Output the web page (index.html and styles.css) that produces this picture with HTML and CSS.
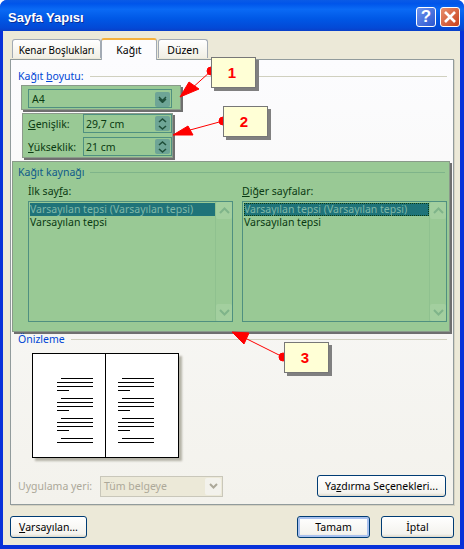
FILE: index.html
```html
<!DOCTYPE html>
<html lang="tr">
<head>
    <meta charset="UTF-8">
    <meta name="viewport" content="width=device-width, initial-scale=1.0">
    <title>Sayfa Yapısı</title>
    <link rel="stylesheet" href="styles.css">
</head>
<body>
    <div class="window">
        <header class="titlebar">
            <span class="title">Sayfa Yapısı</span>
            <span class="cap-btn help">?</span>
            <span class="cap-btn close">
                <svg width="14" height="14" viewBox="0 0 14 14"><path d="M2 2 L12 12 M12 2 L2 12" stroke="#fff" stroke-width="2.6" fill="none"/></svg>
            </span>
        </header>

        <div class="body">
            <div class="tabs">
                <div class="tab tab-first">Kenar Boşlukları</div>
                <div class="tab tab-active">Kağıt</div>
                <div class="tab tab-last">Düzen</div>
            </div>

            <div class="panel">
                <div class="legend legend-paper"><span>Kağıt <u>b</u>oyutu:</span><i></i></div>

                <div class="hl hl-size">
                    <div class="combo">
                        <span>A4</span>
                        <span class="spin-btn combo-btn"><svg width="9" height="7" viewBox="0 0 9 7"><path d="M1 1 L4.5 4.5 L8 1 M1 3 L4.5 6.5 L8 3" stroke="#1f4f3a" stroke-width="1.4" fill="none"/></svg></span>
                    </div>
                </div>

                <div class="hl hl-dims">
                    <div class="dim-row">
                        <label><u>G</u>enişlik:</label>
                        <div class="spin">
                            <span>29,7 cm</span>
                            <span class="spin-btn"><svg width="9" height="14" viewBox="0 0 9 14"><path d="M1 5 L4.5 2 L8 5 M1 9 L4.5 12 L8 9" stroke="#1f4f3a" stroke-width="1.6" fill="none"/></svg></span>
                        </div>
                    </div>
                    <div class="dim-row">
                        <label><u>Y</u>ükseklik:</label>
                        <div class="spin">
                            <span>21 cm</span>
                            <span class="spin-btn"><svg width="9" height="14" viewBox="0 0 9 14"><path d="M1 5 L4.5 2 L8 5 M1 9 L4.5 12 L8 9" stroke="#1f4f3a" stroke-width="1.6" fill="none"/></svg></span>
                        </div>
                    </div>
                </div>

                <div class="hl hl-source">
                    <div class="legend legend-source"><span>Kağıt kaynağı</span><i></i></div>
                    <div class="lists">
                        <div class="list-col">
                            <label>İlk say<u>f</u>a:</label>
                            <div class="listbox">
                                <div class="list-items">
                                    <div class="item selected">Varsayılan tepsi (Varsayılan tepsi)</div>
                                    <div class="item">Varsayılan tepsi</div>
                                </div>
                                <div class="scroll">
                                    <span class="scroll-btn"><svg width="11" height="7" viewBox="0 0 11 7"><path d="M1 6 L5.5 1.5 L10 6" stroke="#7fb48a" stroke-width="2" fill="none"/></svg></span>
                                    <span class="scroll-btn"><svg width="11" height="7" viewBox="0 0 11 7"><path d="M1 1 L5.5 5.5 L10 1" stroke="#7fb48a" stroke-width="2" fill="none"/></svg></span>
                                </div>
                            </div>
                        </div>
                        <div class="list-col">
                            <label><u>D</u>iğer sayfalar:</label>
                            <div class="listbox">
                                <div class="list-items">
                                    <div class="item selected focused">Varsayılan tepsi (Varsayılan tepsi)</div>
                                    <div class="item">Varsayılan tepsi</div>
                                </div>
                                <div class="scroll">
                                    <span class="scroll-btn"><svg width="11" height="7" viewBox="0 0 11 7"><path d="M1 6 L5.5 1.5 L10 6" stroke="#7fb48a" stroke-width="2" fill="none"/></svg></span>
                                    <span class="scroll-btn"><svg width="11" height="7" viewBox="0 0 11 7"><path d="M1 1 L5.5 5.5 L10 1" stroke="#7fb48a" stroke-width="2" fill="none"/></svg></span>
                                </div>
                            </div>
                        </div>
                    </div>
                </div>

                <div class="legend legend-preview"><span>Önizleme</span><i></i></div>

                <div class="preview">
                    <svg class="preview-lines" width="145" height="103" viewBox="0 0 145 103">
                        <path d="M28 24.5h32 M24 28.5h36 M24 32.5h36 M24 36.5h12 M28 44.5h32 M24 48.5h36 M24 52.5h36 M24 56.5h12 M28 64.5h32 M24 68.5h36 M24 72.5h36 M24 76.5h12 M28 84.5h32 M24 88.5h36" stroke="#000" fill="none"/>
                        <path d="M89 24.5h32 M85 28.5h36 M85 32.5h36 M85 36.5h12 M89 44.5h32 M85 48.5h36 M85 52.5h36 M85 56.5h12 M89 64.5h32 M85 68.5h36 M85 72.5h36 M85 76.5h12 M89 84.5h32 M85 88.5h36" stroke="#000" fill="none"/>
                        <path d="M72.5 0v103" stroke="#000" fill="none"/>
                    </svg>
                </div>

                <div class="apply-row">
                    <label>Uygulama yeri:</label>
                    <div class="combo-off">
                        <span>Tüm belgeye</span>
                        <span class="off-btn"><svg width="9" height="6" viewBox="0 0 9 6"><path d="M1 1 L4.5 4.5 L8 1" stroke="#aca899" stroke-width="2" fill="none"/></svg></span>
                    </div>
                    <button class="btn btn-print">Ya<u>z</u>dırma Seçenekleri...</button>
                </div>
            </div>

            <div class="footer">
                <button class="btn btn-default"><u>V</u>arsayılan...</button>
                <button class="btn btn-ok">Tamam</button>
                <button class="btn btn-cancel">İptal</button>
            </div>
        </div>

        <!-- numarali oklar -->
        <svg class="arrows" width="464" height="549" viewBox="0 0 464 549">
            <g stroke="#f00" fill="#f00">
                <path d="M211 71 L190 90" fill="none"/>
                <path d="M180 97 L189 82 L199 89 Z"/>
                <circle cx="211" cy="71" r="4"/>
                <path d="M223 121 L190 130" fill="none"/>
                <path d="M173 135 L188 126 L193 135 Z"/>
                <circle cx="223" cy="121" r="4"/>
                <path d="M283 357 L245 338" fill="none"/>
                <path d="M232 332 L249 333 L244 344 Z"/>
                <circle cx="283" cy="357" r="4"/>
            </g>
        </svg>
        <div class="callout callout-1">1</div>
        <div class="callout callout-2">2</div>
        <div class="callout callout-3">3</div>
    </div>
</body>
</html>
```

FILE: styles.css
```css
* {
    box-sizing: border-box;
}
body {
    margin: 0;
    background: #fff;
    font-family: "Noto Sans", "Liberation Sans", sans-serif;
    font-size: 10.5px;
    color: #000;
}
.window {
    position: relative;
    width: 464px;
    height: 549px;
    display: flex;
    flex-direction: column;
    background: #0831d9;
    border-radius: 7px 7px 0 0;
    overflow: hidden;
}
.titlebar {
    height: 31px;
    flex: none;
    display: flex;
    align-items: center;
    padding: 2px 4px 0 8px;
    background: linear-gradient(#0a5ae6 0, #0055ea 12%, #0a6af5 30%, #0058e6 60%, #0349d6 90%, #0a3fc8 100%);
}
.title {
    flex: 1;
    color: #fff;
    font-family: "Liberation Sans", sans-serif;
    font-weight: bold;
    font-size: 13px;
    padding-top: 1px;
    text-shadow: 1px 1px 0 #0a2f9a;
}
.cap-btn {
    width: 20px;
    height: 20px;
    margin-left: 4px;
    border: 1px solid #fff;
    border-radius: 3px;
    display: flex;
    align-items: center;
    justify-content: center;
    color: #fff;
    font-family: "Liberation Sans", sans-serif;
    font-weight: bold;
    font-size: 17px;
}
.help {
    background: linear-gradient(135deg, #6f95ee, #2a55d0);
}
.close {
    background: linear-gradient(135deg, #e8906e, #c8401c);
}
.body {
    flex: 1;
    margin: 0 4px 4px 3px;
    background: #ece9d8;
    padding: 7px 6px 0 7px;
    display: flex;
    flex-direction: column;
}
.tabs {
    display: flex;
    height: 21px;
    padding-left: 2px;
    align-items: flex-end;
    position: relative;
    z-index: 1;
}
.tab {
    height: 19px;
    margin-bottom: 1px;
    padding-top: 3px;
    text-align: center;
    font-size: 9.9px;
    background: linear-gradient(#fff, #f1efe4);
    border: 1px solid #a2aab4;
    border-bottom: none;
    border-radius: 3px 3px 0 0;
}
.tab-first {
    width: 89px;
}
.tab-active {
    width: 56px;
    height: 22px;
    margin-bottom: -1px;
    padding-top: 3px;
    font-size: 10.5px;
    background: #fcfcfe;
    border-top: 2px solid #f5b13d;
    border-color: #f5b13d #a2aab4 #fcfcfe;
}
.tab-last {
    width: 50px;
    margin-left: 1px;
    font-size: 10.5px;
}
.panel {
    height: 446px;
    width: 444px;
    flex: none;
    border: 1px solid #919b9c;
    background: linear-gradient(#fcfcfe, #f3f2ec);
    box-shadow: 1px 1px 0 #d5d2c2;
    display: flex;
    flex-direction: column;
}
.legend {
    display: flex;
    align-items: center;
    height: 14px;
    color: #0046d5;
}
.legend i {
    flex: 1;
    height: 1px;
    margin-left: 6px;
    background: #d0d0bf;
}
.legend-paper {
    margin: 9px 6px 0 7px;
}
.legend-source {
    margin: 0 4px 0 5px;
    color: #0f5a8a;
}
.legend-source i {
    background: #7fb48a;
}
.legend-preview {
    margin: 0 6px 0 7px;
}
.hl {
    background: #99c995;
    border: 1px solid #8a9a8a;
    box-shadow: 2px 2px 0 #6f6f6f;
    color: #0a3a12;
}
.hl-size {
    width: 160px;
    height: 25px;
    margin: 2px 0 0 10px;
    padding: 3px 0 0 6px;
}
.combo {
    width: 144px;
    height: 19px;
    border: 1px solid #4f9080;
    display: flex;
    align-items: center;
    justify-content: space-between;
    padding: 1px 1px 0 3px;
}
.spin-btn {
    width: 15px;
    height: 15px;
    background: #6ea596;
    border-radius: 2px;
    display: flex;
    align-items: center;
    justify-content: center;
}
.hl-dims {
    width: 151px;
    height: 45px;
    margin: 3px 0 0 11px;
    padding: 0 0 0 5px;
}
.dim-row {
    display: flex;
    align-items: center;
    height: 19px;
    margin-bottom: 4px;
}
.dim-row label {
    width: 55px;
}
.spin {
    width: 89px;
    height: 19px;
    border: 1px solid #4f9080;
    display: flex;
    align-items: center;
    justify-content: space-between;
    padding: 0 1px 0 2px;
}
.hl-source {
    width: 438px;
    height: 171px;
    margin: 3px 0 0 1px;
    padding-top: 3px;
    color: #0a3a12;
}
.lists {
    display: flex;
    gap: 9px;
    margin: 5px 0 0 15px;
}
.list-col {
    width: 205px;
}
.list-col label {
    display: block;
    height: 17px;
}
.listbox {
    height: 121px;
    border: 1px solid #4f9080;
    display: flex;
}
.list-items {
    flex: 1;
    padding: 1px 0 0 1px;
}
.item {
    height: 13px;
    line-height: 13px;
    white-space: nowrap;
}
.selected {
    background: #1f7379;
    color: #7fb8a8;
}
.focused {
    outline: 1px dotted #0a3a12;
    outline-offset: -1px;
}
.scroll {
    width: 17px;
    display: flex;
    flex-direction: column;
    justify-content: space-between;
    border-left: 1px solid #8fc18f;
}
.scroll-btn {
    height: 17px;
    background: #a3cf9f;
    border-radius: 2px;
    display: flex;
    align-items: center;
    justify-content: center;
}
.preview {
    width: 147px;
    height: 105px;
    margin: 7px 0 0 21px;
    background: #fff;
    border: 1px solid #000;
    box-shadow: 3px 3px 2px #b5b3a8;
}
.preview-lines {
    display: block;
}
.apply-row {
    display: flex;
    align-items: center;
    height: 22px;
    margin: 17px 7px 0 7px;
    color: #aca899;
}
.apply-row label {
    width: 82px;
}
.combo-off {
    width: 123px;
    height: 21px;
    background: #ece9d8;
    border: 1px solid #c9c7ba;
    display: flex;
    align-items: center;
    justify-content: space-between;
    padding: 0 1px 0 3px;
}
.off-btn {
    width: 16px;
    height: 17px;
    background: #f3f2ec;
    border-radius: 2px;
    display: flex;
    align-items: center;
    justify-content: center;
}
.btn {
    font-family: inherit;
    font-size: 10.5px;
    height: 22px;
    padding: 0;
    color: #000;
    background: linear-gradient(#fff, #f4f3ee 85%, #dcd8ca);
    border: 1px solid #003c74;
    border-radius: 3px;
}
.btn-print {
    width: 129px;
    margin-left: auto;
}
.footer {
    display: flex;
    margin-top: 11px;
}
.btn-default {
    width: 77px;
}
.btn-ok {
    width: 73px;
    margin-left: auto;
    box-shadow: inset 0 0 0 2px #a9c1ee;
}
.btn-cancel {
    width: 73px;
    margin-left: 11px;
}
.arrows {
    position: absolute;
    left: 0;
    top: 0;
}
.callout {
    position: absolute;
    width: 45px;
    height: 31px;
    padding-right: 3px;
    background: #ffffd6;
    border: 1px solid #777;
    box-shadow: 3px 3px 0 #808080;
    color: #f00;
    font-family: "Liberation Sans", sans-serif;
    font-weight: bold;
    font-size: 15px;
    display: flex;
    align-items: center;
    justify-content: center;
}
.callout-1 {
    left: 211px;
    top: 57px;
}
.callout-2 {
    left: 223px;
    top: 106px;
}
.callout-3 {
    left: 284px;
    top: 342px;
}
```
